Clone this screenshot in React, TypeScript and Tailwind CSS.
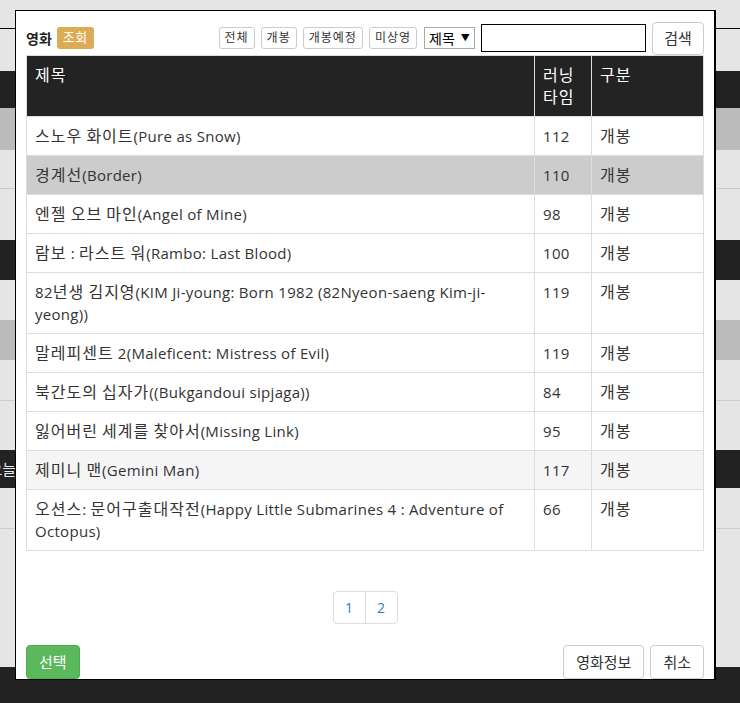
const movies = [
  { title: '스노우 화이트(Pure as Snow)', time: '112', kind: '개봉', bg: 'bg-white' },
  { title: '경계선(Border)', time: '110', kind: '개봉', bg: 'bg-[#cccccc]' },
  { title: '엔젤 오브 마인(Angel of Mine)', time: '98', kind: '개봉', bg: 'bg-white' },
  { title: '람보 : 라스트 워(Rambo: Last Blood)', time: '100', kind: '개봉', bg: 'bg-white' },
  {
    title: '82년생 김지영(KIM Ji-young: Born 1982 (82Nyeon-saeng Kim-ji-yeong))',
    time: '119',
    kind: '개봉',
    bg: 'bg-white',
  },
  { title: '말레피센트 2(Maleficent: Mistress of Evil)', time: '119', kind: '개봉', bg: 'bg-white' },
  { title: '북간도의 십자가((Bukgandoui sipjaga))', time: '84', kind: '개봉', bg: 'bg-white' },
  { title: '잃어버린 세계를 찾아서(Missing Link)', time: '95', kind: '개봉', bg: 'bg-white' },
  { title: '제미니 맨(Gemini Man)', time: '117', kind: '개봉', bg: 'bg-[#f5f5f5]' },
  {
    title: '오션스: 문어구출대작전(Happy Little Submarines 4 : Adventure of Octopus)',
    time: '66',
    kind: '개봉',
    bg: 'bg-white',
  },
];

const filters = ['전체', '개봉', '개봉예정', '미상영'];

// hangul runs are set a bit wider so the text runs as long as in the original
const Han = ({ text }: { text: string }) => (
  <>
    {text.split(/([\uac00-\ud7a3]+)/).map((part, i) =>
      /[\uac00-\ud7a3]/.test(part) ? (
        <span key={i} className="text-[16px] tracking-[1px]">
          {part}
        </span>
      ) : (
        part
      ),
    )}
  </>
);

const cell = 'border border-[#dddddd] px-2 py-2 align-top';

const MoviePopup = () => {
  return (
    <div className="absolute left-[15px] top-[10px] flex h-[670px] w-[701px] flex-col border border-r-2 border-black bg-white px-[10px] pt-[10px] text-[#333]">
      {/* search bar */}
      <div className="flex h-[34px] items-center justify-between">
        <div className="flex items-center gap-[5px]">
          <span className="text-[14px] font-bold text-[#222]">영화</span>
          <span className="flex h-[22px] items-center rounded-[3px] bg-[#dcab55] px-[6px] text-[13px] tracking-[0.5px] text-white">
            조회
          </span>
        </div>
        <div className="flex items-center">
          {filters.map((f) => (
            <button
              key={f}
              type="button"
              className="mr-[6px] h-[22px] rounded-[3px] border border-[#cccccc] bg-white px-[5px] text-[12px] leading-none tracking-[1px] text-[#333]">
              {f}
            </button>
          ))}
          <div className="ml-px flex h-[22px] w-[51px] items-center border border-[#a9a9a9] bg-white pl-[4px] text-[14px] text-black">
            제목
            <span className="ml-[6px] text-[9px]">▼</span>
          </div>
          <input
            type="text"
            className="ml-[6px] h-[28px] w-[165px] border border-black bg-white outline-none"
          />
          <button
            type="button"
            className="ml-[6px] h-[33px] w-[52px] rounded-[4px] border border-[#cccccc] bg-white text-[15px] text-[#333]">
            검색
          </button>
        </div>
      </div>

      {/* movie table */}
      <table className="w-full table-fixed border-collapse border border-[#dddddd] text-[15px] leading-[22px] tracking-[0.3px]">
        <colgroup>
          <col />
          <col className="w-[57px]" />
          <col className="w-[112px]" />
        </colgroup>
        <thead>
          <tr className="bg-[#232323] text-left text-white">
            <th className={`h-[60px] font-normal ${cell}`}>
              <Han text="제목" />
            </th>
            <th className={`font-normal ${cell}`}>
              <Han text="러닝 타임" />
            </th>
            <th className={`font-normal ${cell}`}>
              <Han text="구분" />
            </th>
          </tr>
        </thead>
        <tbody>
          {movies.map((m) => (
            <tr key={m.title} className={m.bg}>
              <td className={cell}>
                <Han text={m.title} />
              </td>
              <td className={cell}>{m.time}</td>
              <td className={cell}>
                <Han text={m.kind} />
              </td>
            </tr>
          ))}
        </tbody>
      </table>

      {/* pagination */}
      <div className="mt-[40px] flex justify-center text-[14px] text-[#337ab7]">
        <span className="flex h-[33px] w-[33px] items-center justify-center rounded-l-[4px] border border-[#dddddd]">
          1
        </span>
        <span className="-ml-px flex h-[33px] w-[33px] items-center justify-center rounded-r-[4px] border border-[#dddddd]">
          2
        </span>
      </div>

      {/* footer buttons */}
      <div className="mt-[21px] flex items-center justify-between">
        <button
          type="button"
          className="h-[34px] rounded-[4px] border border-[#4cae4c] bg-[#5cb85c] px-3 text-[15px] text-white">
          선택
        </button>
        <div className="flex gap-[6px]">
          <button
            type="button"
            className="h-[34px] rounded-[4px] border border-[#cccccc] bg-white px-3 text-[15px] text-[#333]">
            영화정보
          </button>
          <button
            type="button"
            className="h-[34px] rounded-[4px] border border-[#cccccc] bg-white px-3 text-[15px] text-[#333]">
            취소
          </button>
        </div>
      </div>
    </div>
  );
};

export default function App() {
  return (
    <div className="relative h-[703px] w-[740px] overflow-hidden bg-[#e5e5e5] font-['Open_Sans','Noto_Sans_CJK_KR',sans-serif]">
      {/* page behind the popup */}
      <div className="flex flex-col">
        <div className="h-[28px]" />
        <div className="h-px bg-black" />
        <div className="h-[42px]" />
        <div className="h-[37px] bg-[#222]" />
        <div className="h-[42px] bg-[#bbbbbb]" />
        <div className="h-[39px] border-b border-[#cccccc]" />
        <div className="h-[51px]" />
        <div className="h-[40px] bg-[#222]" />
        <div className="h-[40px]" />
        <div className="h-[40px] bg-[#bbbbbb]" />
        <div className="h-[41px] border-b border-[#cccccc]" />
        <div className="h-[49px]" />
        <div className="flex h-[38px] items-center bg-[#222]">
          <div className="flex w-[16px] justify-end overflow-hidden whitespace-nowrap text-[15px] text-[#e8e8e8]">
            오늘
          </div>
        </div>
        <div className="h-[41px] border-b border-[#cccccc]" />
        <div className="h-[138px]" />
        <div className="h-[36px] bg-[#222]" />
      </div>

      <MoviePopup />
    </div>
  );
}
